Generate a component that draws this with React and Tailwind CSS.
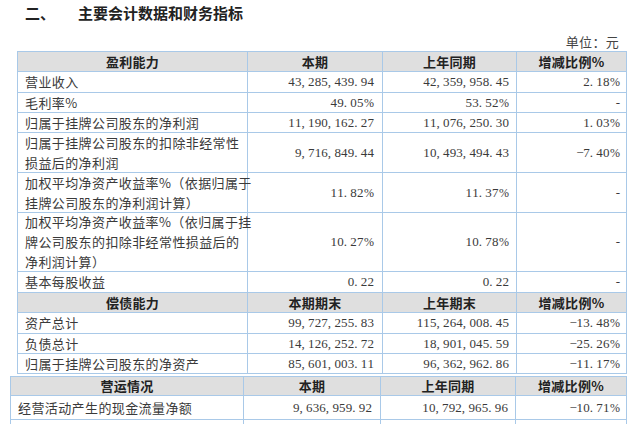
import React from "react";

const cjk = "font-['Noto_Sans_CJK_SC',sans-serif]";
const num = "font-['Liberation_Serif','Noto_Sans_CJK_SC',serif]";

const profit = [
  { label: ["营业收入"], h: "h-[21px]", a: "43,285,439.94", b: "42,359,958.45", c: "2.18%" },
  { label: ["毛利率%"], h: "h-[20px]", a: "49.05%", b: "53.52%", c: "-" },
  { label: ["归属于挂牌公司股东的净利润"], h: "h-[20px]", a: "11,190,162.27", b: "11,076,250.30", c: "1.03%" },
  { label: ["归属于挂牌公司股东的扣除非经常性", "损益后的净利润"], h: "h-[40px]", a: "9,716,849.44", b: "10,493,494.43", c: "-7.40%" },
  { label: ["加权平均净资产收益率%（依据归属于", "挂牌公司股东的净利润计算）"], h: "h-[40px]", a: "11.82%", b: "11.37%", c: "-" },
  { label: ["加权平均净资产收益率%（依归属于挂", "牌公司股东的扣除非经常性损益后的", "净利润计算）"], h: "h-[59px]", a: "10.27%", b: "10.78%", c: "-" },
  { label: ["基本每股收益"], h: "h-[21px]", a: "0.22", b: "0.22", c: "-" },
];

const debt = [
  { label: ["资产总计"], h: "h-[21px]", a: "99,727,255.83", b: "115,264,008.45", c: "-13.48%" },
  { label: ["负债总计"], h: "h-[20px]", a: "14,126,252.72", b: "18,901,045.59", c: "-25.26%" },
  { label: ["归属于挂牌公司股东的净资产"], h: "h-[20px]", a: "85,601,003.11", b: "96,362,962.86", c: "-11.17%" },
];

const cell = "border-r border-b border-[#a9c9e8] flex items-center";

// SimSun-like half-width figures: every character takes the same width
const Num = ({ value }) => {
  if (value === "-") {
    return <span className={`${num} text-[13px] text-[#3a3a3a]`}>-</span>;
  }
  return (
    <span className={`${num} text-[13px] text-[#3a3a3a] whitespace-nowrap`}>
      {value.split("").map((ch, i) =>
        ch === "%" ? (
          <span key={i} className="inline-block text-[12px] ml-[0.5px]">%</span>
        ) : ch === "-" ? (
          <span key={i} className="inline-block w-[7px] text-center">−</span>
        ) : (
          <span key={i} className={`inline-block w-[6.6px] ${ch === "," || ch === "." ? "text-left" : "text-center"}`}>
            {ch}
          </span>
        )
      )}
    </span>
  );
};

const HeaderRow = ({ cols, h }) => (
  <>
    {cols.map((t, i) => (
      <div
        key={i}
        className={`${cell} ${h} justify-center bg-[#dfdfdf] ${cjk} text-[13px] font-bold text-[#222] tracking-[0.3px]`}
      >
        {t}
      </div>
    ))}
  </>
);

const DataRow = ({ row }) => (
  <>
    <div className={`${cell} ${row.h} pl-[7px] ${cjk} text-[13px] leading-[20px] tracking-[0.4px] text-[#3a3a3a] whitespace-nowrap`}>
      <div>
        {row.label.map((l, i) => (
          <div key={i}>{l}</div>
        ))}
      </div>
    </div>
    <div className={`${cell} ${row.h} justify-end pr-[8px]`}>
      <Num value={row.a} />
    </div>
    <div className={`${cell} ${row.h} justify-end pr-[7px]`}>
      <Num value={row.b} />
    </div>
    <div className={`${cell} ${row.h} justify-end pr-[6px]`}>
      <Num value={row.c} />
    </div>
  </>
);

export default function App() {
  return (
    <div className="w-[634px] h-[424px] overflow-hidden bg-white">
      <div className={`h-[32px] pt-[3px] flex items-start pl-[25px] ${cjk} text-[15px] leading-[20px] font-bold text-[#222]`}>
        <span className="w-[53px]">二、</span>
        <span>主要会计数据和财务指标</span>
      </div>
      <div className={`h-[19px] flex items-center justify-end pr-[15px] ${cjk} text-[13px] tracking-[0.3px] text-[#444]`}>
        单位：元
      </div>

      <div className="ml-[17px] w-[610px] grid grid-cols-[230px_135px_134px_110px] border-l border-t border-[#a9c9e8]">
        <HeaderRow cols={["盈利能力", "本期", "上年同期", "增减比例%"]} h="h-[20px]" />
        {profit.map((r, i) => (
          <DataRow key={i} row={r} />
        ))}
        <HeaderRow cols={["偿债能力", "本期期末", "上年期末", "增减比例%"]} h="h-[20px]" />
        {debt.map((r, i) => (
          <DataRow key={i} row={r} />
        ))}
      </div>

      <div className="mt-[2px] ml-[10px] w-[617px] grid grid-cols-[233px_137px_135px_111px] border-l border-t border-[#a9c9e8]">
        <HeaderRow cols={["营运情况", "本期", "上年同期", "增减比例%"]} h="h-[19px]" />
        <DataRow
          row={{ label: ["经营活动产生的现金流量净额"], h: "h-[24px]", a: "9,636,959.92", b: "10,792,965.96", c: "-10.71%" }}
        />
        <DataRow row={{ label: [""], h: "h-[20px]", a: "", b: "", c: "" }} />
      </div>
    </div>
  );
}
